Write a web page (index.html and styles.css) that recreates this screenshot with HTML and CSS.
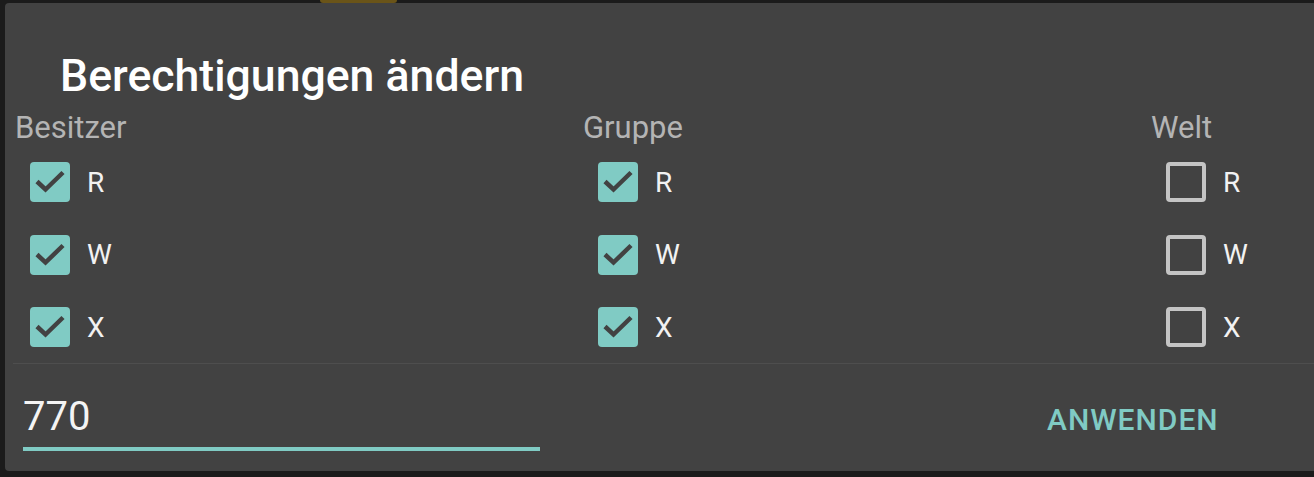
FILE: index.html
```html
<!DOCTYPE html>
<html lang="de">
<head>
    <meta charset="UTF-8">
    <meta name="viewport" content="width=device-width, initial-scale=1.0">
    <title>Berechtigungen ändern</title>
    <link rel="stylesheet" href="styles.css">
</head>
<body>
    <div class="backdrop">
        <span class="peek"></span>
    </div>

    <div class="dialog">
        <h1 class="dialog-title">Berechtigungen ändern</h1>

        <div class="perm-grid">
            <div class="perm-col">
                <div class="perm-head">Besitzer</div>
                <label class="perm-row"><span class="box checked"><svg viewBox="0 0 40 40"><polyline points="7,19.5 15.5,27.5 33,10.5"/></svg></span>R</label>
                <label class="perm-row"><span class="box checked"><svg viewBox="0 0 40 40"><polyline points="7,19.5 15.5,27.5 33,10.5"/></svg></span>W</label>
                <label class="perm-row"><span class="box checked"><svg viewBox="0 0 40 40"><polyline points="7,19.5 15.5,27.5 33,10.5"/></svg></span>X</label>
            </div>
            <div class="perm-col">
                <div class="perm-head">Gruppe</div>
                <label class="perm-row"><span class="box checked"><svg viewBox="0 0 40 40"><polyline points="7,19.5 15.5,27.5 33,10.5"/></svg></span>R</label>
                <label class="perm-row"><span class="box checked"><svg viewBox="0 0 40 40"><polyline points="7,19.5 15.5,27.5 33,10.5"/></svg></span>W</label>
                <label class="perm-row"><span class="box checked"><svg viewBox="0 0 40 40"><polyline points="7,19.5 15.5,27.5 33,10.5"/></svg></span>X</label>
            </div>
            <div class="perm-col">
                <div class="perm-head">Welt</div>
                <label class="perm-row"><span class="box"></span>R</label>
                <label class="perm-row"><span class="box"></span>W</label>
                <label class="perm-row"><span class="box"></span>X</label>
            </div>
        </div>

        <div class="dialog-footer">
            <div class="octal-field">770</div>
            <button class="apply-btn">ANWENDEN</button>
        </div>
    </div>
</body>
</html>
```

FILE: styles.css
```css
* {
    margin: 0;
    padding: 0;
    box-sizing: border-box;
}

html, body {
    height: 100%;
    overflow: hidden;
}

body {
    font-family: Roboto, "Noto Sans", Arial, sans-serif;
    background-color: #1b1b1b;
}

.backdrop {
    height: 3px;
    position: relative;
}

.peek {
    position: absolute;
    left: 320px;
    top: 0;
    width: 77px;
    height: 3px;
    background-color: #6a5418;
    border-radius: 0 0 4px 4px;
}

.dialog {
    margin-left: 5px;
    width: 1340px;
    height: 468px;
    background-color: #424242;
    border-radius: 4px;
}

.dialog-title {
    height: 107px;
    padding: 45px 0 0 55px;
    font-size: 44.6px;
    line-height: 56px;
    font-weight: 500;
    color: #ffffff;
}

.perm-grid {
    display: grid;
    grid-template-columns: 568px 568px 204px;
    padding-left: 10px;
    height: 253px;
}

.perm-head {
    height: 36px;
    font-size: 31px;
    line-height: 36px;
    color: #b4b4b4;
}

.perm-row {
    display: flex;
    align-items: center;
    height: 72.5px;
    padding-left: 15px;
    font-size: 28px;
    color: #f2f2f2;
}

.box {
    width: 40px;
    height: 40px;
    margin-right: 17px;
    border: 4px solid #c4c4c4;
    border-radius: 4px;
    display: flex;
}

.box.checked {
    border: none;
    background-color: #80cbc4;
}

.box svg {
    width: 40px;
    height: 40px;
}

.box polyline {
    fill: none;
    stroke: #424242;
    stroke-width: 4.5;
}

.dialog-footer {
    border-top: 1px solid #4e4e4e;
    margin-left: 8px;
    display: flex;
    align-items: flex-start;
    padding: 30px 0 0 10px;
}

.octal-field {
    width: 517px;
    height: 57px;
    font-size: 40px;
    line-height: 46px;
    color: #f4f4f4;
    border-bottom: 4px solid #80cbc4;
}

.apply-btn {
    margin-left: 507px;
    margin-top: 6px;
    background: none;
    border: none;
    font-family: inherit;
    font-size: 30px;
    font-weight: 500;
    letter-spacing: 1px;
    color: #80cbc4;
    line-height: 40px;
}
```
